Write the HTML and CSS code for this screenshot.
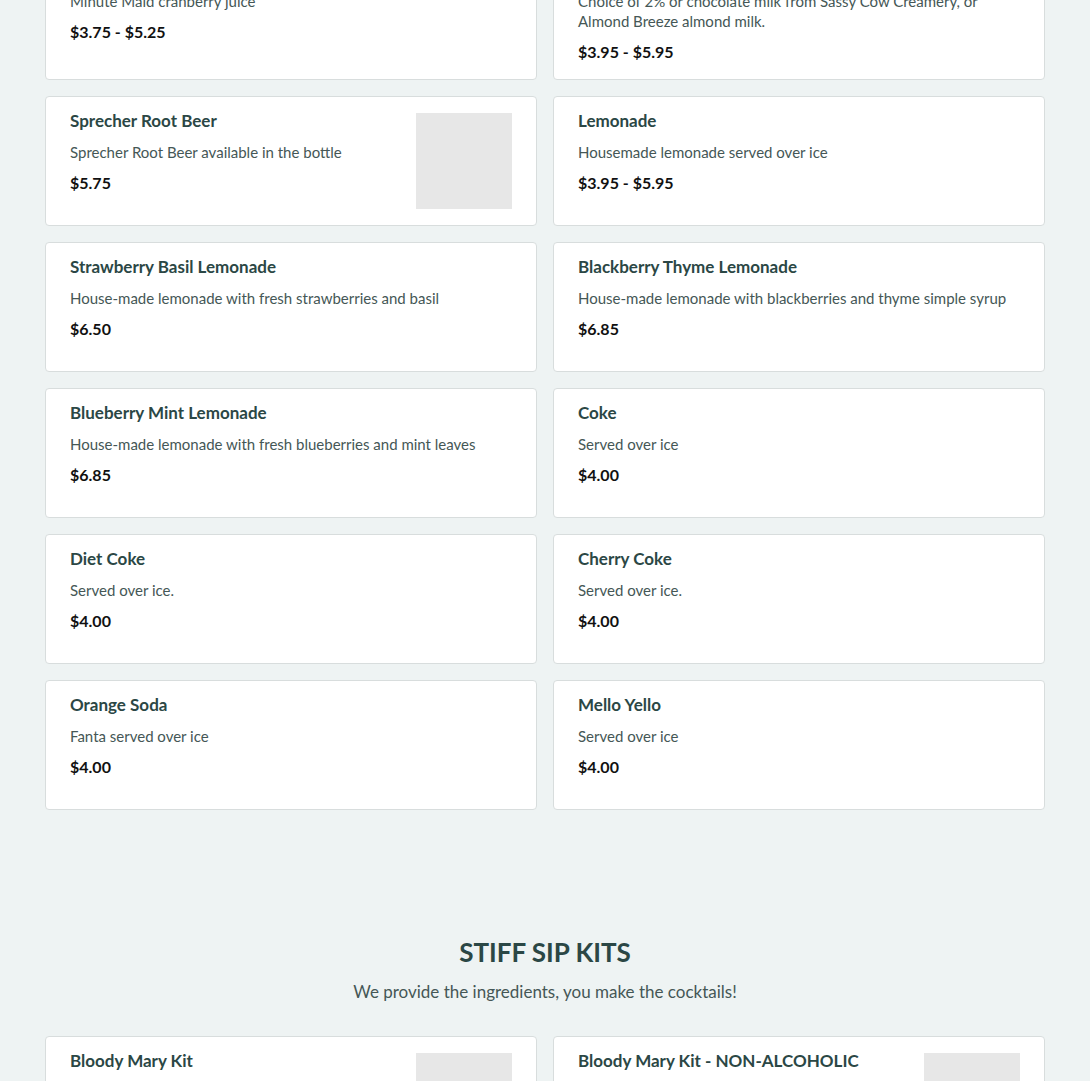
FILE: index.html
```html
<html>
    <head>
        <title>Drinks</title>
        <link rel="stylesheet" href="styles.css">
    </head>
    <body>

        <div class="menu">
            <div class="menu-grid first-grid">
                <div class="item">
                    <div class="item-text">
                        <h3 class="item-name">Cranberry Juice</h3>
                        <p class="item-desc">Minute Maid cranberry juice</p>
                        <div class="item-price">$3.75 - $5.25</div>
                    </div>
                </div>
                <div class="item">
                    <div class="item-text">
                        <h3 class="item-name">Milk</h3>
                        <p class="item-desc">Choice of 2% or chocolate milk from Sassy Cow Creamery, or Almond Breeze almond milk.</p>
                        <div class="item-price">$3.95 - $5.95</div>
                    </div>
                </div>

                <div class="item">
                    <div class="item-text">
                        <h3 class="item-name">Sprecher Root Beer</h3>
                        <p class="item-desc">Sprecher Root Beer available in the bottle</p>
                        <div class="item-price">$5.75</div>
                    </div>
                    <div class="item-photo"></div>
                </div>
                <div class="item">
                    <div class="item-text">
                        <h3 class="item-name">Lemonade</h3>
                        <p class="item-desc">Housemade lemonade served over ice</p>
                        <div class="item-price">$3.95 - $5.95</div>
                    </div>
                </div>

                <div class="item">
                    <div class="item-text">
                        <h3 class="item-name">Strawberry Basil Lemonade</h3>
                        <p class="item-desc">House-made lemonade with fresh strawberries and basil</p>
                        <div class="item-price">$6.50</div>
                    </div>
                </div>
                <div class="item">
                    <div class="item-text">
                        <h3 class="item-name">Blackberry Thyme Lemonade</h3>
                        <p class="item-desc">House-made lemonade with blackberries and thyme simple syrup</p>
                        <div class="item-price">$6.85</div>
                    </div>
                </div>

                <div class="item">
                    <div class="item-text">
                        <h3 class="item-name">Blueberry Mint Lemonade</h3>
                        <p class="item-desc">House-made lemonade with fresh blueberries and mint leaves</p>
                        <div class="item-price">$6.85</div>
                    </div>
                </div>
                <div class="item">
                    <div class="item-text">
                        <h3 class="item-name">Coke</h3>
                        <p class="item-desc">Served over ice</p>
                        <div class="item-price">$4.00</div>
                    </div>
                </div>

                <div class="item">
                    <div class="item-text">
                        <h3 class="item-name">Diet Coke</h3>
                        <p class="item-desc">Served over ice.</p>
                        <div class="item-price">$4.00</div>
                    </div>
                </div>
                <div class="item">
                    <div class="item-text">
                        <h3 class="item-name">Cherry Coke</h3>
                        <p class="item-desc">Served over ice.</p>
                        <div class="item-price">$4.00</div>
                    </div>
                </div>

                <div class="item">
                    <div class="item-text">
                        <h3 class="item-name">Orange Soda</h3>
                        <p class="item-desc">Fanta served over ice</p>
                        <div class="item-price">$4.00</div>
                    </div>
                </div>
                <div class="item">
                    <div class="item-text">
                        <h3 class="item-name">Mello Yello</h3>
                        <p class="item-desc">Served over ice</p>
                        <div class="item-price">$4.00</div>
                    </div>
                </div>
            </div>

            <div class="section-head">
                <h2 class="section-title">STIFF SIP KITS</h2>
                <p class="section-sub">We provide the ingredients, you make the cocktails!</p>
            </div>

            <div class="menu-grid">
                <div class="item">
                    <div class="item-text">
                        <h3 class="item-name">Bloody Mary Kit</h3>
                        <p class="item-desc">Everything you need for a round of Bloody Marys at home</p>
                        <div class="item-price">$28.00</div>
                    </div>
                    <div class="item-photo"></div>
                </div>
                <div class="item">
                    <div class="item-text">
                        <h3 class="item-name">Bloody Mary Kit - NON-ALCOHOLIC</h3>
                        <p class="item-desc">Our Bloody Mary mix and garnishes, without the vodka</p>
                        <div class="item-price">$18.00</div>
                    </div>
                    <div class="item-photo"></div>
                </div>
            </div>
        </div>

    </body>
</html>
```

FILE: styles.css
```css
body {
    font-family: Lato, "Open Sans", sans-serif;
    background-color: #eef3f3;
    color: #455756;
    margin: 0;
}

.menu {
    width: 1000px;
    margin: 0 auto;
}

.menu-grid {
    display: grid;
    grid-template-columns: 1fr 1fr;
    gap: 16px;
}

/* list is scrolled: top row sits partly above the fold */
.first-grid {
    margin-top: -55px;
}

.item {
    display: flex;
    gap: 16px;
    box-sizing: border-box;
    min-height: 130px;
    padding: 14px 24px 16px;
    background-color: white;
    border: 1px solid #d8dddd;
    border-radius: 4px;
}

.item-text {
    flex: 1;
}

.item-name {
    font-size: 17px;
    font-weight: bold;
    line-height: 20px;
    color: #2b4745;
    margin: 0 0 11px;
}

.item-desc {
    font-size: 15px;
    line-height: 20px;
    margin: 0 0 10px;
}

.item-price {
    font-size: 16px;
    font-weight: bold;
    line-height: 22px;
    color: #111;
}

.item-photo {
    width: 96px;
    height: 96px;
    flex-shrink: 0;
    margin-top: 2px;
    background-color: #e7e7e7;
}

.section-head {
    text-align: center;
    padding: 128px 0 32px;
}

.section-title {
    font-size: 26px;
    line-height: 28px;
    font-weight: bold;
    color: #2b4745;
    margin: 0 0 14px;
}

.section-sub {
    font-size: 17px;
    line-height: 24px;
    margin: 0;
}
```
